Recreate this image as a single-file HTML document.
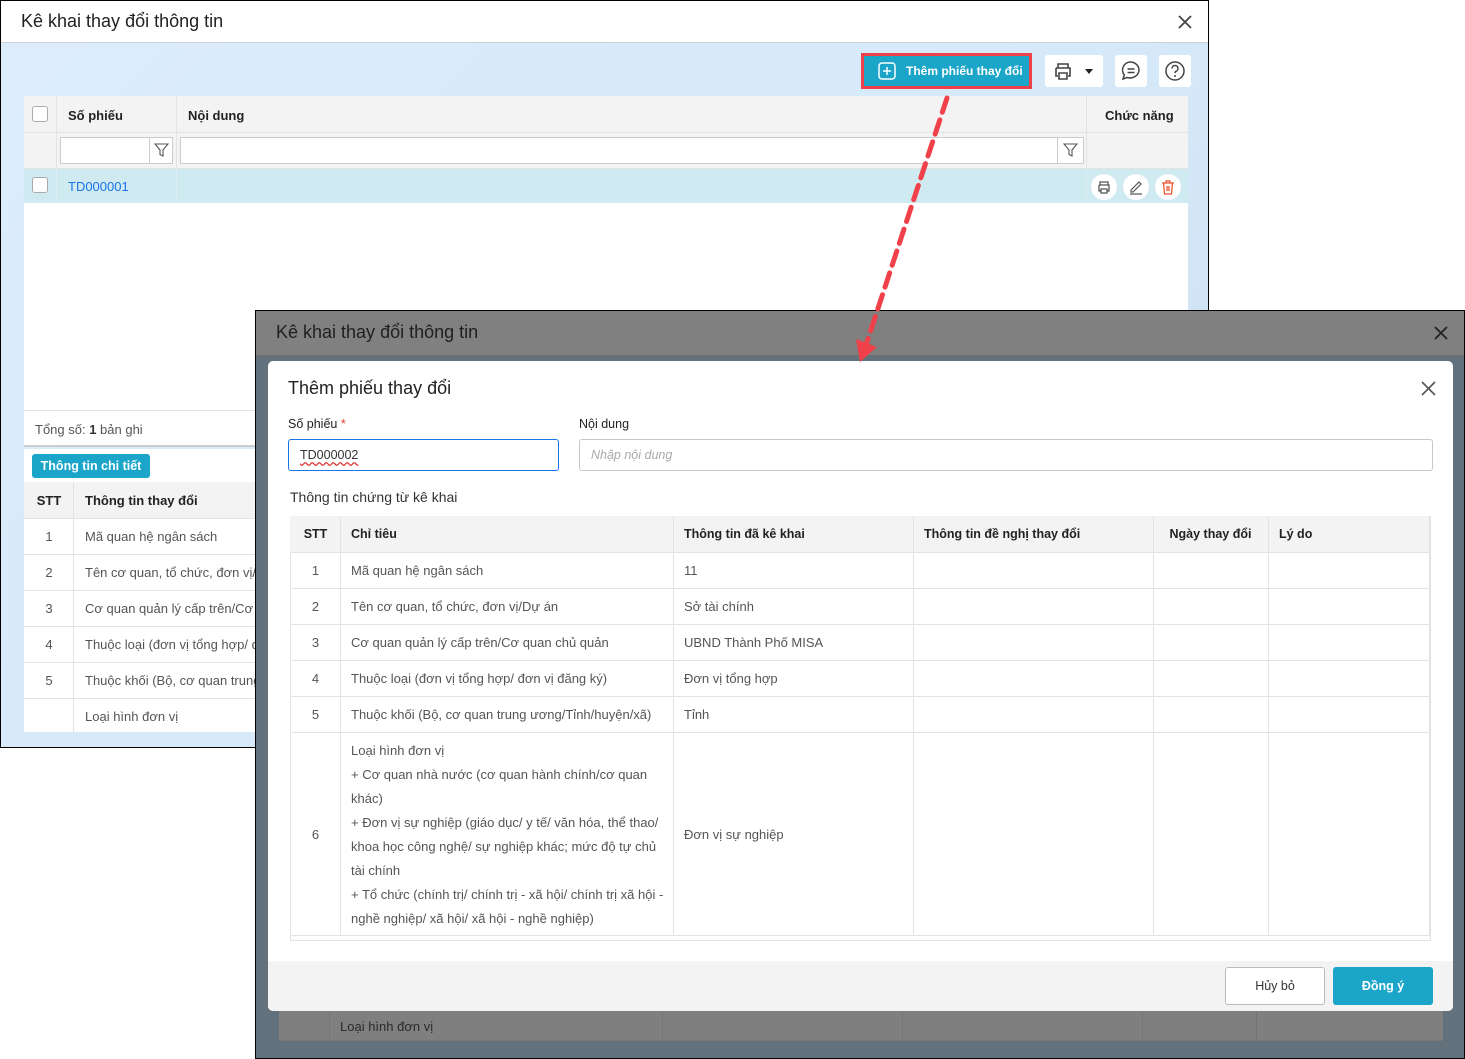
<!DOCTYPE html>
<html><head><meta charset="utf-8"><style>
*{box-sizing:border-box;margin:0;padding:0}
body{width:1465px;height:1059px;background:#fff;position:relative;overflow:hidden;font-family:"Liberation Sans",Arial,sans-serif;font-size:13px;color:#333}
.a{position:absolute}
.w1{left:0;top:0;width:1209px;height:748px;border:1px solid #000;background:linear-gradient(135deg,#dcecfb 0%,#d6e9f9 60%,#c9def0 100%)}
.cell{position:absolute;display:flex;align-items:center;white-space:nowrap;overflow:hidden}
.b{font-weight:bold;color:#222}
.cb{width:16px;height:16px;border:1px solid #aaa;border-radius:3px;background:#fff}
.hl{position:absolute;background:#e3e3e3}
</style></head><body>

<!-- Outer window -->
<div class="a w1">
  <div class="a" style="left:0;top:0;width:1207px;height:42px;background:#fff;border-bottom:1px solid #d0d0d0"></div>
  <div class="a" style="left:20px;top:10px;font-size:18px;color:#222">Kê khai thay đổi thông tin</div>
  <svg class="a" style="left:1176px;top:13px" width="16" height="16"><path d="M2 2L14 14M14 2L2 14" stroke="#444" stroke-width="1.8"/></svg>

  <!-- toolbar -->
  <div class="a" style="left:860px;top:52px;width:171px;height:36px;border:3px solid #f0414a;background:#1ba5c9"></div>
  <svg class="a" style="left:877px;top:61px" width="18" height="18"><rect x="1" y="1" width="16" height="16" rx="3" fill="none" stroke="#fff" stroke-width="1.5"/><path d="M9 5V13M5 9H13" stroke="#fff" stroke-width="1.5"/></svg>
  <div class="a" style="left:905px;top:63px;color:#fff;font-weight:bold;font-size:12px">Thêm phiếu thay đổi</div>
  <div class="a" style="left:1044px;top:54px;width:58px;height:32px;background:#fff;border-radius:3px"></div>
  <svg class="a" style="left:1052px;top:60px" width="44" height="20"><path d="M5 7V3h10v4M3 7h14v8h-2M5 15H3V7M6 12h8v6H6z" fill="none" stroke="#444" stroke-width="1.6"/><path d="M32 8h8l-4 5z" fill="#222"/></svg>
  <div class="a" style="left:1114px;top:54px;width:32px;height:32px;background:#fff;border-radius:3px"></div>
  <svg class="a" style="left:1119px;top:59px" width="22" height="22"><path d="M11 2a9 8 0 1 1-4 15.5L3 19l1.3-4A8 8 0 0 1 11 2z" fill="none" stroke="#444" stroke-width="1.5"/><path d="M7.5 9h7M7.5 12.5h7" stroke="#444" stroke-width="1.5"/></svg>
  <div class="a" style="left:1158px;top:54px;width:32px;height:32px;background:#fff;border-radius:3px"></div>
  <svg class="a" style="left:1163px;top:59px" width="22" height="22"><circle cx="11" cy="11" r="9" fill="none" stroke="#444" stroke-width="1.5"/><path d="M8 8.5a3 3 0 1 1 4 2.8c-.8.4-1 .9-1 1.8" fill="none" stroke="#444" stroke-width="1.5"/><circle cx="11" cy="16" r="1" fill="#444"/></svg>

  <!-- grid -->
  <div class="a" style="left:23px;top:95px;width:1164px;height:315px;background:#fff"></div>
  <div class="a" style="left:23px;top:95px;width:1164px;height:72px;background:#f3f3f3"></div>
  <div class="hl" style="left:23px;top:131px;width:1164px;height:1px"></div>
  <div class="hl" style="left:23px;top:167px;width:1164px;height:1px"></div>
  <div class="hl" style="left:55px;top:95px;width:1px;height:107px"></div>
  <div class="hl" style="left:175px;top:95px;width:1px;height:107px"></div>
  <div class="hl" style="left:1085px;top:95px;width:1px;height:107px"></div>
  <div class="a cb" style="left:31px;top:105px"></div>
  <div class="cell b" style="left:67px;top:96px;height:36px">Số phiếu</div>
  <div class="cell b" style="left:187px;top:96px;height:36px">Nội dung</div>
  <div class="cell b" style="left:1104px;top:96px;height:36px">Chức năng</div>
  <div class="a" style="left:59px;top:136px;width:113px;height:27px;background:#fff;border:1px solid #ccc"></div>
  <div class="hl" style="left:148px;top:137px;width:1px;height:25px;background:#ccc"></div>
  <svg class="a" style="left:153px;top:142px" width="15" height="15"><path d="M1 1h13L9 7v6l-3-1.5V7z" fill="none" stroke="#555" stroke-width="1.1"/></svg>
  <div class="a" style="left:179px;top:136px;width:904px;height:27px;background:#fff;border:1px solid #ccc"></div>
  <div class="hl" style="left:1056px;top:137px;width:1px;height:25px;background:#ccc"></div>
  <svg class="a" style="left:1062px;top:142px" width="15" height="15"><path d="M1 1h13L9 7v6l-3-1.5V7z" fill="none" stroke="#555" stroke-width="1.1"/></svg>
  <div class="a" style="left:23px;top:168px;width:1164px;height:34px;background:#cfebf1"></div>
  <div class="hl" style="left:55px;top:168px;width:1px;height:34px;background:#dfeef2"></div>
  <div class="hl" style="left:175px;top:168px;width:1px;height:34px;background:#dfeef2"></div>
  <div class="hl" style="left:1085px;top:168px;width:1px;height:34px;background:#dfeef2"></div>
  <div class="a cb" style="left:31px;top:176px"></div>
  <div class="cell" style="left:67px;top:168px;height:34px;color:#1a73e8">TD000001</div>
  <div class="a" style="left:1090px;top:173px;width:26px;height:26px;border-radius:50%;background:#fff"></div>
  <svg class="a" style="left:1095px;top:178px" width="16" height="16"><path d="M4 6V3h8v3M3 6h10v6h-2M5 12H3V6M5 10h6v4H5z" fill="none" stroke="#555" stroke-width="1.3"/></svg>
  <div class="a" style="left:1122px;top:173px;width:26px;height:26px;border-radius:50%;background:#fff"></div>
  <svg class="a" style="left:1127px;top:178px" width="16" height="16"><path d="M3 11l8-8 2 2-8 8H3z" fill="none" stroke="#555" stroke-width="1.2"/><path d="M2 15h12" stroke="#555" stroke-width="1.2"/></svg>
  <div class="a" style="left:1154px;top:173px;width:26px;height:26px;border-radius:50%;background:#fff"></div>
  <svg class="a" style="left:1159px;top:178px" width="16" height="16"><path d="M2 4h12M6 4V2h4v2M3.5 4l1 11h7l1-11M7 7v5M9 7v5" fill="none" stroke="#e8542f" stroke-width="1.3"/></svg>

  <div class="a" style="left:23px;top:409px;width:1164px;height:37px;background:#fff;border-top:1px solid #e3e3e3;border-bottom:2px solid #ccc"></div>
  <div class="a" style="left:34px;top:421px;color:#555">Tổng số: <b style="color:#333">1</b> bản ghi</div>
  <div class="a" style="left:23px;top:448px;width:1164px;height:283px;background:#fff"></div>
  <div class="a" style="left:31px;top:453px;width:118px;height:24px;background:#1ba5c9;border-radius:3px;color:#fff;font-weight:bold;font-size:12.5px;text-align:center;line-height:24px">Thông tin chi tiết</div>
  <div class="a" style="left:23px;top:481px;width:1164px;height:36px;background:#f3f3f3"></div>
  <div class="hl" style="left:72px;top:481px;width:1px;height:250px"></div>
  <div class="cell b" style="left:23px;top:481px;width:50px;height:36px;justify-content:center">STT</div>
  <div class="cell b" style="left:84px;top:481px;height:36px">Thông tin thay đổi</div>
  <div class="hl" style="left:23px;top:517px;width:1164px;height:1px"></div>
  <div class="hl" style="left:23px;top:553px;width:1164px;height:1px"></div>
  <div class="hl" style="left:23px;top:589px;width:1164px;height:1px"></div>
  <div class="hl" style="left:23px;top:625px;width:1164px;height:1px"></div>
  <div class="hl" style="left:23px;top:661px;width:1164px;height:1px"></div>
  <div class="hl" style="left:23px;top:697px;width:1164px;height:1px"></div>
  <div class="cell" style="left:23px;top:518px;width:50px;height:35px;justify-content:center;color:#555">1</div>
  <div class="cell" style="left:84px;top:518px;height:35px;color:#555">Mã quan hệ ngân sách</div>
  <div class="cell" style="left:23px;top:554px;width:50px;height:35px;justify-content:center;color:#555">2</div>
  <div class="cell" style="left:84px;top:554px;height:35px;color:#555">Tên cơ quan, tổ chức, đơn vị/Dự án</div>
  <div class="cell" style="left:23px;top:590px;width:50px;height:35px;justify-content:center;color:#555">3</div>
  <div class="cell" style="left:84px;top:590px;height:35px;color:#555">Cơ quan quản lý cấp trên/Cơ quan</div>
  <div class="cell" style="left:23px;top:626px;width:50px;height:35px;justify-content:center;color:#555">4</div>
  <div class="cell" style="left:84px;top:626px;height:35px;color:#555">Thuộc loại (đơn vị tổng hợp/ đơn</div>
  <div class="cell" style="left:23px;top:662px;width:50px;height:35px;justify-content:center;color:#555">5</div>
  <div class="cell" style="left:84px;top:662px;height:35px;color:#555">Thuộc khối (Bộ, cơ quan trung ương</div>
  <div class="cell" style="left:84px;top:698px;height:35px;color:#555">Loại hình đơn vị</div>
</div>

<!-- Second window (overlay) -->
<div class="a" style="left:255px;top:310px;width:1210px;height:749px;border:1px solid #000;background:#63717c;overflow:hidden">
  <div class="a" style="left:0;top:0;width:1210px;height:45px;background:#808080;border-bottom:1px solid #6e6e6e"></div>
  <div class="a" style="left:20px;top:11px;font-size:18px;color:#1f1f1f">Kê khai thay đổi thông tin</div>
  <svg class="a" style="left:1177px;top:14px" width="16" height="16"><path d="M2 2L14 14M14 2L2 14" stroke="#222" stroke-width="1.8"/></svg>
  <div class="a" style="left:23px;top:690px;width:1164px;height:40px;background:#7f7f7f;border-bottom:1px solid #777"></div>
  <div class="hl" style="left:73px;top:690px;width:1px;height:39px;background:#747474"></div>
  <div class="hl" style="left:406px;top:690px;width:1px;height:39px;background:#747474"></div>
  <div class="hl" style="left:646px;top:690px;width:1px;height:39px;background:#747474"></div>
  <div class="hl" style="left:886px;top:690px;width:1px;height:39px;background:#747474"></div>
  <div class="hl" style="left:1000px;top:690px;width:1px;height:39px;background:#747474"></div>
  <div class="a" style="left:84px;top:708px;color:#2a2a2a">Loại hình đơn vị</div>
</div>

<!-- Dialog -->
<div class="a" style="left:268px;top:361px;width:1185px;height:650px;background:#fff;border-radius:5px;overflow:hidden">
  <div class="a" style="left:20px;top:17px;font-size:18px;color:#222">Thêm phiếu thay đổi</div>
  <svg class="a" style="left:1153px;top:20px" width="15" height="15"><path d="M1 1L14 14M14 1L1 14" stroke="#555" stroke-width="1.6"/></svg>
  <div class="a" style="left:20px;top:56px;font-size:12.5px;color:#222">Số phiếu <span style="color:#e53935">*</span></div>
  <div class="a" style="left:311px;top:56px;font-size:12.5px;color:#222">Nội dung</div>
  <div class="a" style="left:20px;top:78px;width:271px;height:32px;border:1px solid #1a73e8;border-radius:3px;padding:0 11px;line-height:30px;color:#333;font-size:12.5px"><span style="text-decoration:underline wavy #d33;text-underline-offset:2px">TD000002</span></div>
  <div class="a" style="left:311px;top:78px;width:854px;height:32px;border:1px solid #c8c8c8;border-radius:3px;padding:0 11px;line-height:30px;color:#aaa;font-style:italic;font-size:12.5px">Nhập nội dung</div>
  <div class="a" style="left:22px;top:128px;font-size:14px;color:#333">Thông tin chứng từ kê khai</div>

  <div class="a" style="left:22px;top:155px;width:1141px;height:425px;border:1px solid #e3e3e3"></div>
  <div class="a" style="left:22px;top:155px;width:1139px;height:37px;background:#f3f3f3"></div>
  <div class="hl" style="left:1161px;top:155px;width:1px;height:420px"></div>
  <div class="hl" style="left:72px;top:155px;width:1px;height:420px"></div>
  <div class="hl" style="left:405px;top:155px;width:1px;height:420px"></div>
  <div class="hl" style="left:645px;top:155px;width:1px;height:420px"></div>
  <div class="hl" style="left:885px;top:155px;width:1px;height:420px"></div>
  <div class="hl" style="left:1000px;top:155px;width:1px;height:420px"></div>
  <div class="hl" style="left:22px;top:191px;width:1139px;height:1px"></div>
  <div class="hl" style="left:22px;top:227px;width:1139px;height:1px"></div>
  <div class="hl" style="left:22px;top:263px;width:1139px;height:1px"></div>
  <div class="hl" style="left:22px;top:299px;width:1139px;height:1px"></div>
  <div class="hl" style="left:22px;top:335px;width:1139px;height:1px"></div>
  <div class="hl" style="left:22px;top:371px;width:1139px;height:1px"></div>
  <div class="hl" style="left:22px;top:574px;width:1139px;height:1px"></div>
  <div class="cell b" style="left:22px;top:155px;width:51px;height:36px;justify-content:center;font-size:12.5px">STT</div>
  <div class="cell b" style="left:83px;top:155px;height:36px;font-size:12.5px">Chỉ tiêu</div>
  <div class="cell b" style="left:416px;top:155px;height:36px;font-size:12.5px">Thông tin đã kê khai</div>
  <div class="cell b" style="left:656px;top:155px;height:36px;font-size:12.5px">Thông tin đề nghị thay đổi</div>
  <div class="cell b" style="left:885px;top:155px;width:115px;height:36px;justify-content:center;font-size:12.5px">Ngày thay đổi</div>
  <div class="cell b" style="left:1011px;top:155px;height:36px;font-size:12.5px">Lý do</div>

  <div class="cell" style="left:22px;top:192px;width:51px;height:35px;justify-content:center;color:#555">1</div>
  <div class="cell" style="left:83px;top:192px;height:35px;color:#555">Mã quan hệ ngân sách</div>
  <div class="cell" style="left:416px;top:192px;height:35px;color:#555">11</div>
  <div class="cell" style="left:22px;top:228px;width:51px;height:35px;justify-content:center;color:#555">2</div>
  <div class="cell" style="left:83px;top:228px;height:35px;color:#555">Tên cơ quan, tổ chức, đơn vị/Dự án</div>
  <div class="cell" style="left:416px;top:228px;height:35px;color:#555">Sở tài chính</div>
  <div class="cell" style="left:22px;top:264px;width:51px;height:35px;justify-content:center;color:#555">3</div>
  <div class="cell" style="left:83px;top:264px;height:35px;color:#555">Cơ quan quản lý cấp trên/Cơ quan chủ quản</div>
  <div class="cell" style="left:416px;top:264px;height:35px;color:#555">UBND Thành Phố MISA</div>
  <div class="cell" style="left:22px;top:300px;width:51px;height:35px;justify-content:center;color:#555">4</div>
  <div class="cell" style="left:83px;top:300px;height:35px;color:#555">Thuộc loại (đơn vị tổng hợp/ đơn vị đăng ký)</div>
  <div class="cell" style="left:416px;top:300px;height:35px;color:#555">Đơn vị tổng hợp</div>
  <div class="cell" style="left:22px;top:336px;width:51px;height:35px;justify-content:center;color:#555">5</div>
  <div class="cell" style="left:83px;top:336px;height:35px;color:#555">Thuộc khối (Bộ, cơ quan trung ương/Tỉnh/huyện/xã)</div>
  <div class="cell" style="left:416px;top:336px;height:35px;color:#555">Tỉnh</div>
  <div class="cell" style="left:22px;top:372px;width:51px;height:202px;justify-content:center;color:#555">6</div>
  <div class="a" style="left:83px;top:378px;width:320px;line-height:24px;color:#555">Loại hình đơn vị<br>+ Cơ quan nhà nước (cơ quan hành chính/cơ quan khác)<br>+ Đơn vị sự nghiệp (giáo dục/ y tế/ văn hóa, thể thao/ khoa học công nghệ/ sự nghiệp khác; mức độ tự chủ tài chính<br>+ Tổ chức (chính trị/ chính trị - xã hội/ chính trị xã hội - nghề nghiệp/ xã hội/ xã hội - nghề nghiệp)</div>
  <div class="cell" style="left:416px;top:372px;height:202px;color:#555">Đơn vị sự nghiệp</div>

  <div class="a" style="left:0;top:600px;width:1185px;height:50px;background:#f3f3f3"></div>
  <div class="a" style="left:957px;top:606px;width:100px;height:38px;background:#fff;border:1px solid #bbb;border-radius:3px;text-align:center;line-height:36px;color:#333;font-size:12.5px">Hủy bỏ</div>
  <div class="a" style="left:1065px;top:606px;width:100px;height:38px;background:#1ba5c9;border-radius:3px;text-align:center;line-height:38px;color:#fff;font-weight:bold;font-size:12.5px">Đồng ý</div>
</div>

<!-- arrow -->
<svg class="a" style="left:0;top:0" width="1465" height="1059">
  <line x1="947" y1="98" x2="867" y2="342" stroke="#f0414a" stroke-width="5" stroke-dasharray="15 8" stroke-linecap="round"/>
  <path d="M860 362L856 339L877 347Z" fill="#f0414a"/>
</svg>
</body></html>
